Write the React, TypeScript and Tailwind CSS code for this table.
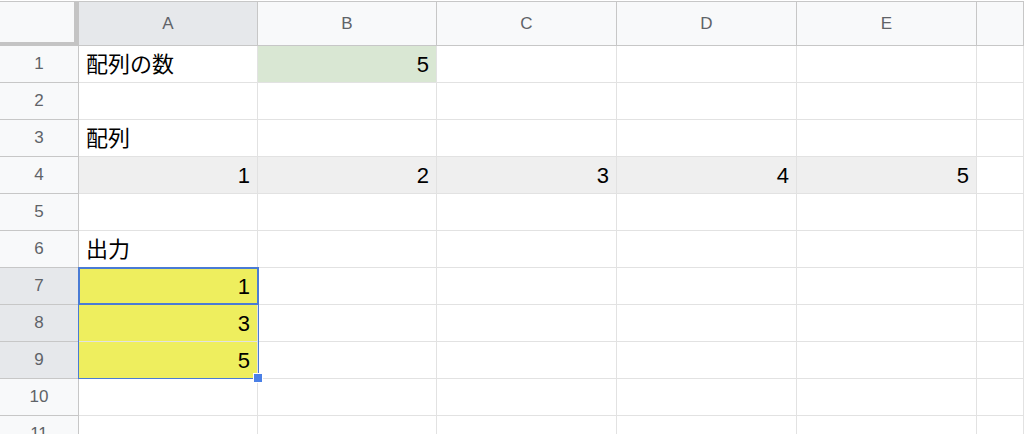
const cols = ['A', 'B', 'C', 'D', 'E', ''];

type Cell = { text?: string; align?: 'left' | 'right'; bg?: string };

const cellData: Record<string, Cell> = {
  A1: { text: '配列の数' },
  B1: { text: '5', align: 'right', bg: 'bg-[#d9e7d3]' },
  A3: { text: '配列' },
  A4: { text: '1', align: 'right', bg: 'bg-[#efefef]' },
  B4: { text: '2', align: 'right', bg: 'bg-[#efefef]' },
  C4: { text: '3', align: 'right', bg: 'bg-[#efefef]' },
  D4: { text: '4', align: 'right', bg: 'bg-[#efefef]' },
  E4: { text: '5', align: 'right', bg: 'bg-[#efefef]' },
  A6: { text: '出力' },
  A7: { text: '1', align: 'right', bg: 'bg-[#eeee5e]' },
  A8: { text: '3', align: 'right', bg: 'bg-[#eeee5e]' },
  A9: { text: '5', align: 'right', bg: 'bg-[#eeee5e]' },
};

const rows = [1, 2, 3, 4, 5, 6, 7, 8, 9, 10, 11];
const selectedRows = [7, 8, 9];

const App = () => {
  return (
    <div
      className="relative h-[434px] w-[1024px] overflow-hidden bg-white pt-px"
      style={{ fontFamily: '"Liberation Sans", Arial, "Noto Sans CJK JP", sans-serif' }}
    >
      <div className="grid grid-cols-[79px_179px_179px_180px_180px_180px_1fr] grid-rows-[44px_repeat(11,37px)] border-t border-[#c7c7c7]">
        {/* header row */}
        <div className="border-r-[5px] border-b-[4px] border-[#c4c4c4] bg-[#f8f9fa]" />
        {cols.map((c, i) => (
          <div
            key={`h${i}`}
            className={`flex items-center justify-center border-r border-b border-[#c7c7c7] text-[17px] text-[#5f6368] ${
              c === 'A' ? 'bg-[#e6e8eb]' : 'bg-[#f8f9fa]'
            }`}
          >
            {c}
          </div>
        ))}

        {rows.map((r) => (
          <div key={`r${r}`} className="contents">
            <div
              className={`flex items-center justify-center border-r border-b border-[#c7c7c7] text-[17px] text-[#5f6368] ${
                selectedRows.includes(r) ? 'bg-[#e6e8eb]' : 'bg-[#f8f9fa]'
              }`}
            >
              {r}
            </div>
            {cols.map((c, i) => {
              const cell = cellData[`${c}${r}`];
              return (
                <div
                  key={`c${r}${i}`}
                  className={`flex items-center border-r border-b border-[#e2e2e2] px-[7px] text-[22px] text-black ${
                    cell?.align === 'right' ? 'justify-end' : 'justify-start'
                  } ${cell?.bg ?? 'bg-white'}`}
                >
                  {cell?.text}
                </div>
              );
            })}
          </div>
        ))}
      </div>

      {/* selection A7:A9 */}
      <div className="absolute left-[78px] top-[267px] h-[112px] w-[181px] border border-[#4a7bd4]" />
      <div className="absolute left-[78px] top-[267px] h-[38px] w-[181px] border-2 border-[#4a7bd4]" />
      <div className="absolute left-[253px] top-[373px] h-[10px] w-[10px] border border-white bg-[#4a80e6]" />
    </div>
  );
};

export default App;
